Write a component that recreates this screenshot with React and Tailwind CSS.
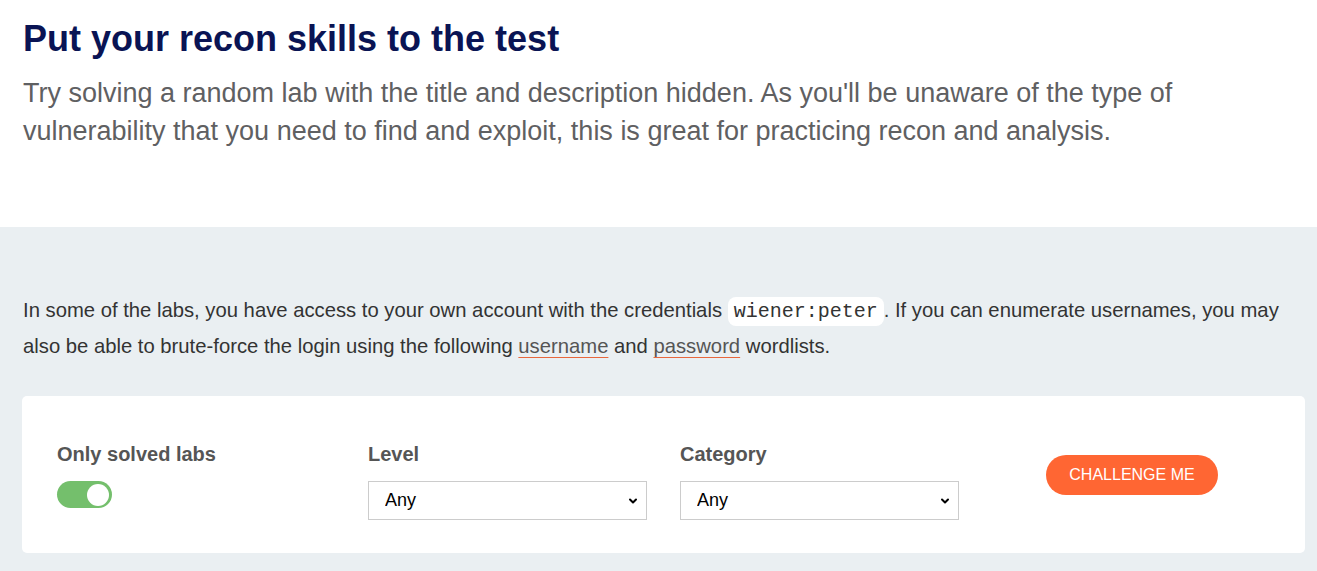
import { ChevronDown } from "lucide-react";

function Field({ label, width = "w-[311px]", children }) {
  return (
    <div className={`${width} shrink-0 flex flex-col`}>
      <label className="text-[20px] font-bold text-[#555555] leading-[24px]">{label}</label>
      <div className="mt-[15px]">{children}</div>
    </div>
  );
}

function Select() {
  return (
    <div className="relative w-[279px]">
      <select className="appearance-none w-full h-[39px] border border-[#cccccc] bg-white pl-[16px] text-[18px] text-black outline-none">
        <option>Any</option>
      </select>
      <ChevronDown
        className="absolute right-[8px] top-[14px] w-[12px] h-[12px] text-black pointer-events-none"
        strokeWidth={4}
      />
    </div>
  );
}

function App() {
  return (
    <div className="min-h-screen bg-[#eaeff2] font-['Liberation_Sans',Arial,sans-serif]">
      <section className="bg-white h-[227px] px-[23px] pt-[17px]">
        <h1 className="text-[36px] font-bold text-[#0a1454] leading-[44px]">
          Put your recon skills to the test
        </h1>
        <p className="mt-[13px] text-[27px] leading-[38px] text-[#5f6062]">
          Try solving a random lab with the title and description hidden. As you'll be unaware of the type of
          vulnerability that you need to find and exploit, this is great for practicing recon and analysis.
        </p>
      </section>

      <section className="pl-[22px] pr-[12px] pt-[66px] pb-[18px]">
        <p className="text-[20.25px] leading-[34px] text-[#333333] pl-[1px]">
          In some of the labs, you have access to your own account with the credentials{" "}
          <code className="bg-white rounded-[8px] px-[6px] py-[3px] font-['Liberation_Mono','Courier_New',monospace] text-[20px] text-[#333333]">
            wiener:peter
          </code>
          . If you can enumerate usernames, you may also be able to brute-force the login using the following{" "}
          <a className="text-[#555555] underline decoration-[#e8673d] decoration-1 underline-offset-[4px]">username</a> and{" "}
          <a className="text-[#555555] underline decoration-[#e8673d] decoration-1 underline-offset-[4px]">password</a> wordlists.
        </p>

        <div className="mt-[33px] bg-white rounded-[5px] h-[157px] pl-[35px] pt-[46px] flex items-start">
          <Field label="Only solved labs">
            <div className="w-[55px] h-[27px] rounded-full bg-[#74bf6c] flex items-center justify-end pr-[3px]">
              <div className="w-[22px] h-[22px] rounded-full bg-white" />
            </div>
          </Field>
          <Field label="Level" width="w-[312px]">
            <Select />
          </Field>
          <Field label="Category" width="w-[279px]">
            <Select />
          </Field>
          <button className="ml-[87px] mt-[13px] h-[40px] w-[172px] rounded-full bg-[#ff6633] text-white text-[16px] uppercase">
            Challenge me
          </button>
        </div>
      </section>
    </div>
  );
}

export default App;
